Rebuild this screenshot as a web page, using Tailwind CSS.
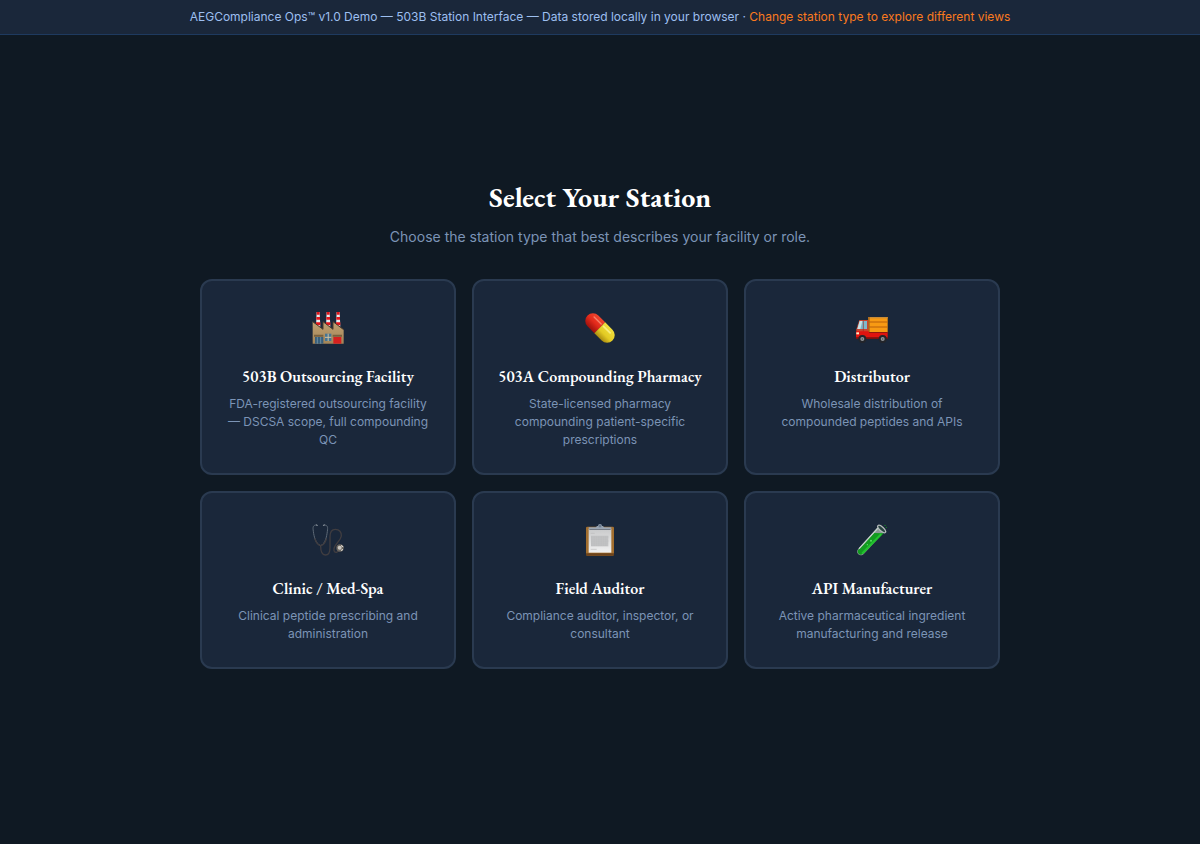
<!DOCTYPE html>
<html lang="en">
<head>
  <meta charset="UTF-8" />
  <meta name="viewport" content="width=device-width, initial-scale=1.0" />
  <title>AEGCompliance Ops</title>
  <script src="https://cdn.jsdelivr.net/npm/@tailwindcss/browser@4"></script>
</head>
<body class="min-h-screen bg-[#0f1923] font-['Inter',sans-serif] text-white antialiased">
  <header class="border-b border-[#1e3a5f] bg-[#1a273a] px-4 py-2 text-center text-xs leading-[18px] text-[#9dbff0]">
    AEGCompliance Ops™ v1.0 Demo — 503B Station Interface — Data stored locally in your browser ·
    <a href="#stations" class="text-[#fb7a1e]">Change station type to explore different views</a>
  </header>

  <main class="flex min-h-[calc(100vh-69px)] flex-col items-center justify-center px-6">
    <h1 class="mb-2 font-['EB_Garamond','Liberation_Serif',serif] text-[28px] leading-[42px] font-bold">Select Your Station</h1>
    <p class="mb-8 text-sm leading-[21px] text-[#7c94b6]">Choose the station type that best describes your facility or role.</p>

    <div id="stations" class="grid w-full max-w-[800px] grid-cols-3 gap-4">
      <button type="button" class="flex flex-col items-center rounded-xl border-2 border-[#2a3a50] bg-[#1a273a] px-6 pt-[31px] pb-6 text-center">
        <svg class="mb-[21px] size-8" viewBox="0 0 96 96" aria-hidden="true">
          <defs>
            <linearGradient id="wall" x1="0" y1="0" x2="0" y2="1"><stop offset="0" stop-color="#c0a172" /><stop offset="1" stop-color="#a38558" /></linearGradient>
          </defs>
          <g fill="#e8eaec">
            <path d="M14 0h9l2 44H12zM44 0h9l2 44H42zM74 0h9l2 44H72z" />
          </g>
          <g fill="#e0161b">
            <path d="M14 0h9v8h-9zM13 15h11v8H13zM12 31h13v9H12zM44 0h9v8h-9zM43 15h11v8H43zM42 31h13v9H42zM74 0h9v8h-9zM73 15h11v8H73zM72 31h13v9H72z" />
          </g>
          <path d="M2 29l31 23V29l30 23V29l32 24v42H2z" fill="url(#wall)" />
          <path d="M2 29l31 23V29l30 23V29l32 24" fill="none" stroke="#4b3b2c" stroke-width="3" />
          <path d="M6 68h28v6H6zM62 68h28v6H62z" fill="#77603f" />
          <path d="M9 75h25v20H9z" fill="#385f7b" />
          <path d="M16 75v20M26 75v20" stroke="#86a5b5" stroke-width="2" />
          <path d="M39 65h19v22H39z" fill="#467593" />
          <path d="M48.500 65v22M39 76h19" stroke="#d2c2a0" stroke-width="3" />
          <path d="M64 75h24v20H64z" fill="#d6201f" />
        </svg>
        <span class="mb-1.5 font-['EB_Garamond','Liberation_Serif',serif] text-base leading-6 font-semibold whitespace-nowrap">503B Outsourcing Facility</span>
        <span class="text-xs leading-[18px] text-[#7c94b6]">FDA-registered outsourcing facility — DSCSA scope, full compounding QC</span>
      </button>

      <button type="button" class="flex flex-col items-center rounded-xl border-2 border-[#2a3a50] bg-[#1a273a] px-6 pt-[31px] pb-6 text-center">
        <svg class="mb-[21px] size-8" viewBox="0 0 96 96" aria-hidden="true">
          <defs>
            <linearGradient id="red" x1="0" y1="0" x2="0" y2="1"><stop offset="0" stop-color="#f0472f" /><stop offset=".5" stop-color="#e32a1b" /><stop offset="1" stop-color="#9c100c" /></linearGradient>
            <linearGradient id="yellow" x1="0" y1="0" x2="0" y2="1"><stop offset="0" stop-color="#f2df3f" /><stop offset=".6" stop-color="#e3cb23" /><stop offset="1" stop-color="#a98b10" /></linearGradient>
          </defs>
          <g transform="rotate(45 48 48)">
            <path d="M47 25H18a23 23 0 0 0 0 46h29z" fill="url(#red)" />
            <path d="M47 25h31a23 23 0 0 1 0 46H47z" fill="url(#yellow)" />
            <path d="M12 37h30" stroke="#f9806a" stroke-width="4" stroke-linecap="round" />
            <path d="M52 37h28" stroke="#f8ee80" stroke-width="5" stroke-linecap="round" />
          </g>
        </svg>
        <span class="mb-1.5 font-['EB_Garamond','Liberation_Serif',serif] text-base leading-6 font-semibold whitespace-nowrap">503A Compounding Pharmacy</span>
        <span class="text-xs leading-[18px] text-[#7c94b6]">State-licensed pharmacy compounding patient-specific prescriptions</span>
      </button>

      <button type="button" class="flex flex-col items-center rounded-xl border-2 border-[#2a3a50] bg-[#1a273a] px-6 pt-[31px] pb-6 text-center">
        <svg class="mb-[21px] size-8" viewBox="0 0 96 96" aria-hidden="true">
          <path d="M37 15h58v46H37z" fill="#f79a13" />
          <path d="M37 15h58v4H37z" fill="#c98b35" />
          <path d="M38 30h57M38 45h57" stroke="#b85f0b" stroke-width="3" />
          <path d="M37 15h4v46h-4z" fill="#a8641a" />
          <path d="M10 24h27v40H1V52z" fill="#c9442f" />
          <path d="M11 27h22v24H4z" fill="#7fb8cb" />
          <path d="M11 27h8l-6 24H4z" fill="#c9e2e6" />
          <path d="M22 26v38" stroke="#9c2a22" stroke-width="2" />
          <path d="M0 58h37l2 2h56v17H0z" fill="#e0140f" />
          <path d="M0 76h95v5H0z" fill="#7d100c" />
          <path d="M1 61h8v6H1z" fill="#fff0c8" />
          <path d="M39 60h56v3H39z" fill="#8e1710" />
          <circle cx="19" cy="81" r="12" fill="#23252a" />
          <circle cx="80" cy="81" r="12" fill="#23252a" />
          <circle cx="19" cy="81" r="6" fill="#8f9397" />
          <circle cx="80" cy="81" r="6" fill="#8f9397" />
          <circle cx="19" cy="81" r="2" fill="#44474b" />
          <circle cx="80" cy="81" r="2" fill="#44474b" />
        </svg>
        <span class="mb-1.5 font-['EB_Garamond','Liberation_Serif',serif] text-base leading-6 font-semibold whitespace-nowrap">Distributor</span>
        <span class="text-xs leading-[18px] text-[#7c94b6]">Wholesale distribution of compounded peptides and APIs</span>
      </button>

      <button type="button" class="flex flex-col items-center rounded-xl border-2 border-[#2a3a50] bg-[#1a273a] px-6 pt-[31px] pb-6 text-center">
        <svg class="mb-[21px] size-8" viewBox="0 0 96 96" fill="none" stroke-linecap="round" aria-hidden="true">
          <path d="M26 66c0 16 4 27 14 27 11 0 14-9 14-22V38c0-14 6-22 16-22 12 0 19 9 18 20-2 15-20 23-22 38-1 8 2 12 8 11l8-6" stroke="#403d40" stroke-width="4" />
          <path d="M13 3C3 3 2 9 4 22c2 16 7 38 22 43 14-5 18-27 20-43 2-13 1-19-9-19" stroke="#5d6976" stroke-width="3" />
          <path d="M9 45c3 10 9 18 17 20 8-2 14-10 17-20" stroke="#403d40" stroke-width="4" />
          <path d="M13 3l3 1M37 3l-3 1" stroke="#9aa2aa" stroke-width="3" />
          <circle cx="84" cy="72" r="11" fill="#6b665f" />
          <circle cx="83" cy="71" r="6" fill="#c9c5be" />
          <path d="M88 65l5 3M88 79l4-2" stroke="#ece9e2" stroke-width="3" />
        </svg>
        <span class="mb-1.5 font-['EB_Garamond','Liberation_Serif',serif] text-base leading-6 font-semibold whitespace-nowrap">Clinic / Med-Spa</span>
        <span class="text-xs leading-[18px] text-[#7c94b6]">Clinical peptide prescribing and administration</span>
      </button>

      <button type="button" class="flex flex-col items-center rounded-xl border-2 border-[#2a3a50] bg-[#1a273a] px-6 pt-[31px] pb-6 text-center">
        <svg class="mb-[21px] size-8" viewBox="0 0 96 96" aria-hidden="true">
          <defs>
            <linearGradient id="sheet" x1="0" y1="0" x2="0" y2="1"><stop offset="0" stop-color="#c9cacb" /><stop offset="1" stop-color="#f1f1f1" /></linearGradient>
          </defs>
          <rect x="6" y="8" width="84" height="87" rx="4" fill="#a36f2f" />
          <path d="M6 88h84v4q0 3-4 3H10q-4 0-4-3z" fill="#6d431b" />
          <path d="M14 15h68v71H14z" fill="url(#sheet)" />
          <path d="M20 28h12M20 76h18" stroke="#bbbbbb" stroke-width="2" />
          <path d="M21 35h52v32H21z" fill="#c2c3c4" />
          <path d="M21 39h52M21 45h50M21 51h52M21 57h50M21 63h48" stroke="#b9babc" stroke-width="2" stroke-dasharray="5 2" />
          <path d="M14 10h21l5-4h16l5 4h21v6H14z" fill="#9aa5b2" />
          <path d="M16 16h64v2H16z" fill="#4d5663" />
          <circle cx="48" cy="6" r="6" fill="#8796a8" />
          <circle cx="48" cy="6" r="2" fill="#3f4b5a" />
        </svg>
        <span class="mb-1.5 font-['EB_Garamond','Liberation_Serif',serif] text-base leading-6 font-semibold whitespace-nowrap">Field Auditor</span>
        <span class="text-xs leading-[18px] text-[#7c94b6]">Compliance auditor, inspector, or consultant</span>
      </button>

      <button type="button" class="flex flex-col items-center rounded-xl border-2 border-[#2a3a50] bg-[#1a273a] px-6 pt-[31px] pb-6 text-center">
        <svg class="mb-[21px] size-8" viewBox="0 0 96 96" aria-hidden="true">
          <path d="M66 8l18 17-60 64c-6 6-12 6-17 2-5-5-5-11 0-17z" fill="#8b9896" />
          <path d="M54 27l29 1-60 60c-5 5-11 5-15 1-4-4-4-9 1-14z" fill="#129a20" />
          <path d="M74 32L20 87" stroke="#22c42e" stroke-width="6" stroke-linecap="round" />
          <path d="M65 13L10 73" stroke="#c5d2cb" stroke-width="4" stroke-linecap="round" />
          <circle cx="45" cy="50" r="3" fill="#5be063" />
          <circle cx="34" cy="62" r="2" fill="#5be063" />
          <ellipse cx="77" cy="15" rx="15" ry="6" transform="rotate(42 77 15)" fill="#27423f" stroke="#b4babb" stroke-width="4" />
          <circle cx="87" cy="4" r="2" fill="#168e26" />
          <circle cx="91" cy="10" r="2" fill="#168e26" />
        </svg>
        <span class="mb-1.5 font-['EB_Garamond','Liberation_Serif',serif] text-base leading-6 font-semibold whitespace-nowrap">API Manufacturer</span>
        <span class="text-xs leading-[18px] text-[#7c94b6]">Active pharmaceutical ingredient manufacturing and release</span>
      </button>
    </div>
  </main>
</body>
</html>
